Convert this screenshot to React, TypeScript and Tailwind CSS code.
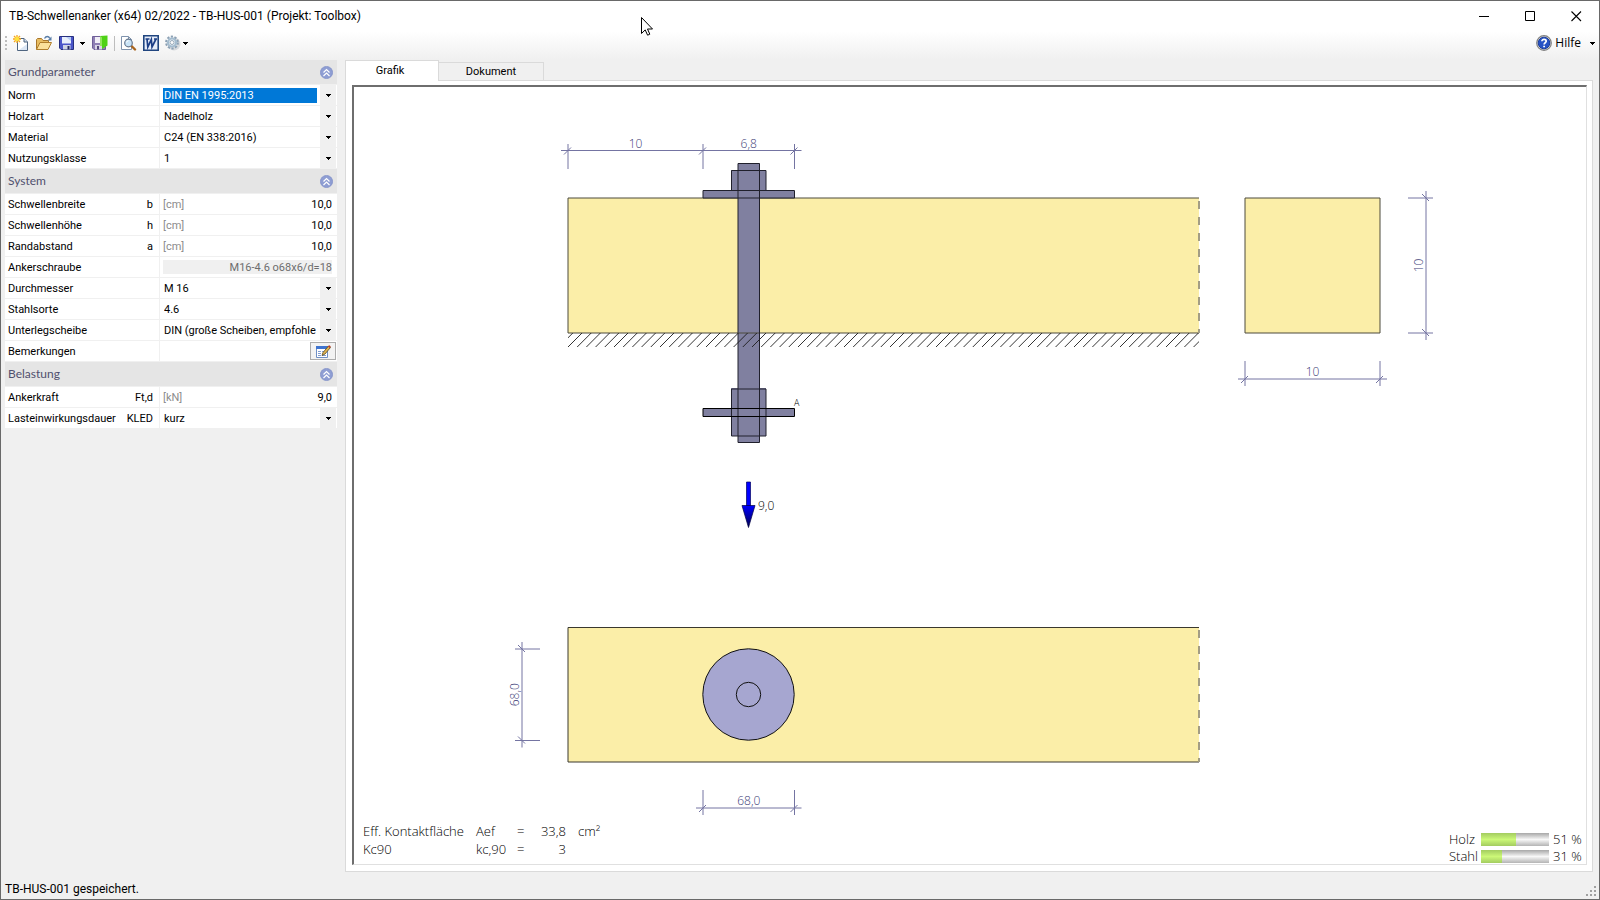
import React from 'react'
import clsx from 'clsx'

type RowKind = 'select' | 'number' | 'readonly' | 'notes'

interface ParamRow {
  id: string
  label: string
  symbol?: string
  unit?: string
  kind: RowKind
  value?: string
  selected?: boolean
}

interface ParamGroup {
  title: string
  rows: ParamRow[]
}

const groups: ParamGroup[] = [
  {
    title: 'Grundparameter',
    rows: [
      { id: 'norm', label: 'Norm', kind: 'select', value: 'DIN EN 1995:2013', selected: true },
      { id: 'holzart', label: 'Holzart', kind: 'select', value: 'Nadelholz' },
      { id: 'material', label: 'Material', kind: 'select', value: 'C24 (EN 338:2016)' },
      { id: 'nkl', label: 'Nutzungsklasse', kind: 'select', value: '1' }
    ]
  },
  {
    title: 'System',
    rows: [
      { id: 'b', label: 'Schwellenbreite', symbol: 'b', unit: '[cm]', kind: 'number', value: '10,0' },
      { id: 'h', label: 'Schwellenhöhe', symbol: 'h', unit: '[cm]', kind: 'number', value: '10,0' },
      { id: 'a', label: 'Randabstand', symbol: 'a', unit: '[cm]', kind: 'number', value: '10,0' },
      { id: 'schraube', label: 'Ankerschraube', kind: 'readonly', value: 'M16-4.6 o68x6/d=18' },
      { id: 'durchmesser', label: 'Durchmesser', kind: 'select', value: 'M 16' },
      { id: 'stahl', label: 'Stahlsorte', kind: 'select', value: '4.6' },
      { id: 'scheibe', label: 'Unterlegscheibe', kind: 'select', value: 'DIN (große Scheiben, empfohlen)' },
      { id: 'notes', label: 'Bemerkungen', kind: 'notes' }
    ]
  },
  {
    title: 'Belastung',
    rows: [
      { id: 'ft', label: 'Ankerkraft', symbol: 'Ft,d', unit: '[kN]', kind: 'number', value: '9,0' },
      { id: 'kled', label: 'Lasteinwirkungsdauer', symbol: 'KLED', kind: 'select', value: 'kurz' }
    ]
  }
]

const Caret = () => (
  <svg width="5" height="3" viewBox="0 0 5 3" className="shrink-0" shapeRendering="crispEdges">
    <path d="M0 0h5v1H4v1H3v1H2V2H1V1H0z" fill="#000" />
  </svg>
)

const NewIcon = () => (
  <svg width="16" height="16" viewBox="0 0 16 16">
    <path d="M4.500 3.500h6.500l3.500 3.500v8.500h-10z" fill="#fff" stroke="#4f6580" />
    <path d="M6 15h8V9z" fill="#dbe6f4" />
    <path d="M11 3.500V7h3.500" fill="#cfdcec" stroke="#4f6580" />
    <path d="M4 0v8M0 4h8M1 1l6 6M7 1L1 7" stroke="#f7a51b" strokeWidth="1.300" />
    <circle cx="4" cy="4" r="2.200" fill="#ffe23c" />
  </svg>
)

const OpenIcon = () => (
  <svg width="16" height="16" viewBox="0 0 16 16">
    <path d="M.5 14.500V4.500l1-1h4l1.500 2h5.500v3" fill="#e8bd62" stroke="#a9772a" />
    <path d="M.5 14.500L4 7.500h11.500L12 14.500z" fill="#fbe09a" stroke="#b07e2c" />
    <path d="M8.500 3.500C10 .8 12.500.8 14 3.500" fill="none" stroke="#5a7ea8" strokeWidth="1.300" />
    <path d="M15.500 1.500v4h-4z" fill="#5a7ea8" />
  </svg>
)

const SaveIcon = () => (
  <svg width="15" height="16" viewBox="0 0 15 16">
    <path d="M.5 1.500h14v13H2L.5 13z" fill="#4a55c8" stroke="#27307f" />
    <path d="M3 2h9v6.500H3z" fill="#e8effc" />
    <path d="M7 2h5v4z" fill="#b8cdf4" />
    <path d="M4 10h7.500v4.500H4z" fill="#cdd3e4" />
    <path d="M8.500 11h2v3.500h-2z" fill="#20265e" />
  </svg>
)

const SaveExitIcon = () => (
  <svg width="16" height="16" viewBox="0 0 16 16">
    <path d="M.5 1.500h13v13H2L.5 13z" fill="#8f7fb4" stroke="#6f5f98" />
    <path d="M3 2h6v6H3z" fill="#f1eef6" />
    <path d="M3 10h7v4.500H3z" fill="#d9d5e5" />
    <path d="M5 11h2v3.500H5z" fill="#54467c" />
    <path d="M8 1l7.500-.5v10L10 14V3z" fill="#4fd216" />
    <path d="M8 1l2 1.500V11H8z" fill="#91e85d" />
  </svg>
)

const PreviewIcon = () => (
  <svg width="16" height="16" viewBox="0 0 16 16">
    <path d="M.5 1.500h7l3 3v10H.5z" fill="#fff" stroke="#7f93ad" />
    <path d="M7.500 1.500v3h3" fill="none" stroke="#7f93ad" />
    <path d="M10.500 11l3.500 3.500" stroke="#a8641d" strokeWidth="2.400" strokeLinecap="round" />
    <circle cx="7.500" cy="8" r="3.800" fill="#c9e3f6" stroke="#66788f" strokeWidth="1.200" />
    <path d="M5.500 7.500a2.300 2.300 0 012-1.800" fill="none" stroke="#fff" />
  </svg>
)

const WordIcon = () => (
  <svg width="16" height="16" viewBox="0 0 16 16">
    <path d="M.8.8h14.400v14.400H.8z" fill="#e6edf9" stroke="#20457f" strokeWidth="1.600" />
    <path d="M2.500 4h4M4 4l.8 8L8.300 4.500l.7 7.500L13 4M11 4h3" fill="none" stroke="#1d3f86" strokeWidth="1.700" />
  </svg>
)

const GearIcon = () => (
  <svg width="16" height="16" viewBox="0 0 16 16">
    <ellipse cx="9" cy="9" rx="6.500" ry="6.500" fill="#d8dadd" />
    <circle cx="7" cy="7.500" r="5.900" fill="none" stroke="#8ba0b4" strokeWidth="2" strokeDasharray="2.200 1.500" />
    <circle cx="7" cy="7.500" r="4" fill="#edf4f9" stroke="#a4bccf" strokeWidth="2.200" />
    <circle cx="7" cy="7.500" r="2" fill="#fafafa" stroke="#8397aa" strokeWidth=".8" />
  </svg>
)

const HelpIcon = () => (
  <svg width="16" height="16" viewBox="0 0 16 16">
    <circle cx="8" cy="8" r="7.300" fill="#d8d8d8" stroke="#808080" strokeWidth="1.200" />
    <circle cx="8" cy="8" r="5.800" fill="#2753c4" stroke="#1c3f9e" />
    <path d="M5.900 6.300c0-2.700 4.300-2.600 4.300 0 0 1.500-2.100 1.500-2.100 3.200" fill="none" stroke="#fff" strokeWidth="1.700" />
    <path d="M7.200 10.700H9v1.600H7.200z" fill="#fff" />
  </svg>
)

const CollapseIcon = () => (
  <svg width="13" height="13" viewBox="0 0 13 13">
    <circle cx="6.500" cy="6.500" r="6.100" fill="#8f9ed3" stroke="#7a8ac6" strokeWidth=".7" />
    <path d="M3.500 6.500l3-3 3 3M3.500 10l3-3 3 3" fill="none" stroke="#fff" strokeWidth="1.200" />
  </svg>
)

const NotesIcon = () => (
  <svg width="16" height="13" viewBox="0 0 16 13">
    <path d="M1.500 1.500h11v11h-11z" fill="#fff" stroke="#6f8fc4" />
    <path d="M1 1h12v3H1z" fill="#3f74cf" />
    <path d="M3 6.500h3M3 8.500h3M3 10.500h3M7 6.500h4M7 10.500h4" stroke="#7f9bd0" />
    <path d="M7 10.500l1-3L13.500 1 15.500 2.500 10 9z" fill="#e0b350" stroke="#5b4a1e" strokeWidth=".8" />
    <path d="M13 1.500L14.500.3l1.300 1.200-1 1.500z" fill="#c0392b" />
  </svg>
)

const TitleBar = () => (
  <header className="flex h-[30px] items-center bg-white pl-2">
    <h1 className="flex-1 font-['Roboto',sans-serif] text-[12px] leading-4">
      TB-Schwellenanker (x64) 02/2022 - TB-HUS-001 (Projekt: Toolbox)
    </h1>
    <button aria-label="Minimieren" className="flex h-full w-[46px] items-center justify-center">
      <svg width="11" height="11" viewBox="0 0 11 11">
        <path d="M0 5.500h10" stroke="#000" />
      </svg>
    </button>
    <button aria-label="Maximieren" className="flex h-full w-[46px] items-center justify-center">
      <svg width="11" height="11" viewBox="0 0 11 11">
        <path d="M.5.500h9v9h-9z" fill="none" stroke="#000" />
      </svg>
    </button>
    <button aria-label="Schließen" className="flex h-full w-[46px] items-center justify-center">
      <svg width="11" height="11" viewBox="0 0 11 11">
        <path d="M.5.500l9.500 9.500M10 .5L.5 10" stroke="#000" strokeWidth="1.100" />
      </svg>
    </button>
  </header>
)

const Toolbar = () => (
  <div className="flex h-[29px] items-start bg-linear-to-b from-white to-[#f0f0f0] pt-1 pr-1 pl-1" role="toolbar">
    <div className="flex h-4 items-center">
      <svg width="3" height="14" viewBox="0 0 3 14" className="mr-[5px]" shapeRendering="crispEdges">
        <path d="M0 0h2v2H0zM0 4h2v2H0zM0 8h2v2H0zM0 12h2v2H0z" fill="#bdbdbd" />
      </svg>
      <button aria-label="Neu" className="mr-[7px]"><NewIcon /></button>
      <button aria-label="Öffnen" className="mr-[7px]"><OpenIcon /></button>
      <button aria-label="Speichern" className="mr-[6px]"><SaveIcon /></button>
      <button aria-label="Speichern unter" className="mr-[7px]"><Caret /></button>
      <button aria-label="Speichern und beenden" className="mr-[6px]"><SaveExitIcon /></button>
      <span className="mr-[6px] h-[15px] w-px bg-[#bdbdbd]" />
      <button aria-label="Seitenansicht" className="mr-[6px]"><PreviewIcon /></button>
      <button aria-label="Word" className="mr-[6px]"><WordIcon /></button>
      <button aria-label="Einstellungen" className="flex items-center gap-[2px]">
        <GearIcon />
        <Caret />
      </button>
    </div>
    <button className="ml-auto flex h-4 items-center text-[12px]">
      <HelpIcon />
      <span className="mr-[9px] ml-[3px]">Hilfe</span>
      <Caret />
    </button>
  </div>
)

const ParamControl: React.FC<{ row: ParamRow }> = ({ row }) => {
  if (row.kind === 'select') {
    return (
      <>
        <select
          id={row.id}
          className={clsx(
            'mt-px mr-[3px] ml-[3px] h-[15px] w-0 flex-1 appearance-none overflow-hidden px-px leading-[15px] outline-none',
            row.selected ? 'bg-[#0078d7] text-white' : 'bg-white'
          )}
        >
          <option>{row.value}</option>
        </select>
        <span className="pointer-events-none mr-px flex h-5 w-4 items-center justify-center bg-[#f0f0f0]">
          <Caret />
        </span>
      </>
    )
  }
  if (row.kind === 'notes') {
    return (
      <button id={row.id} aria-label="Bemerkungen bearbeiten" className="mr-px ml-auto flex h-[18px] w-[26px] items-center justify-center border border-[#adadad] bg-[#f3f3f3]">
        <NotesIcon />
      </button>
    )
  }
  return (
    <>
      {row.unit && <span className="ml-[3px] w-8 pt-[2px] text-[#8c8c8c]">{row.unit}</span>}
      <input
        id={row.id}
        defaultValue={row.value}
        readOnly={row.kind === 'readonly'}
        className={clsx(
          'mr-[5px] h-[14px] w-0 flex-1 pt-px text-right leading-[13px] outline-none',
          row.kind === 'readonly' ? 'ml-[3px] bg-[#f0f0f0] text-[#6d6d6d]' : 'bg-white'
        )}
      />
    </>
  )
}

const ParameterPanel = () => (
  <aside className="w-[332px] shrink-0 font-['Roboto',sans-serif] text-[11px] leading-4">
    {groups.map(group => (
      <section key={group.title}>
        <div className="mb-px flex h-6 items-center justify-between bg-[#e5e5e5] pr-1 pl-[3px]">
          <h2 className="font-['Lato',sans-serif] text-[12px] text-[#50506e]">{group.title}</h2>
          <button aria-label={`${group.title} einklappen`}><CollapseIcon /></button>
        </div>
        {group.rows.map(row => (
          <div key={row.id} className="mb-px flex h-5 gap-px">
            <label htmlFor={row.id} className="flex w-[154px] items-center justify-between bg-white pt-[2px] pr-[6px] pl-[3px]">
              <span>{row.label}</span>
              {row.symbol && <span>{row.symbol}</span>}
            </label>
            <div className="flex flex-1 items-center bg-white">
              <ParamControl row={row} />
            </div>
          </div>
        ))}
      </section>
    ))}
  </aside>
)

// Dimension line with extension lines and slashes at every point
interface DimensionProps {
  points: number[]
  at: number
  ext: [number, number]
  labels: string[]
  vertical?: boolean
}

const Dimension: React.FC<DimensionProps> = ({ points, at, ext, labels, vertical = false }) => {
  const first = points[0] - 7
  const last = points[points.length - 1] + 7
  return (
    <g>
      <g stroke="#5c5c92" strokeWidth="1" fill="none" opacity="0.85">
        <path d={vertical ? `M${at} ${first}V${last}` : `M${first} ${at}H${last}`} />
        {points.map(p => (
          <path
            key={p}
            d={
              vertical
                ? `M${ext[0]} ${p}H${ext[1]}M${at - 4} ${p - 4}l7 7`
                : `M${p} ${ext[0]}V${ext[1]}M${p - 4} ${at + 4}l7 -7`
            }
          />
        ))}
      </g>
      {labels.map((label, i) => {
        const mid = (points[i] + points[i + 1]) / 2
        return (
          <text
            key={i}
            textAnchor="middle"
            fill="#404078"
            fontSize="12"
            transform={vertical ? `translate(${at - 3} ${mid}) rotate(-90)` : `translate(${mid} ${at - 3})`}
          >
            {label}
          </text>
        )
      })}
    </g>
  )
}

const hatchCount = 70

const AnchorDrawing = () => (
  <svg viewBox="354 87 1232 777" className="block h-auto w-full font-['Open_Sans',sans-serif] font-light" role="img" aria-label="Schwellenanker">
    <defs>
      <clipPath id="hatch-area">
        <path d="M568 333H1199V347H568z" />
      </clipPath>
      <linearGradient id="arrow-head" x1="0" y1="0" x2="0" y2="1">
        <stop offset="0" stopColor="#0000ff" />
        <stop offset="1" stopColor="#000050" />
      </linearGradient>
    </defs>

    {/* Side view */}
    <path d="M568 198H1199V333H568z" fill="#fbeea8" />
    <path d="M1199 198H568V333H1199" fill="none" stroke="#4d4a3c" />
    <path d="M1199 201V333" stroke="#a39d85" strokeWidth="2" strokeDasharray="8 8" />

    <g fill="#8080a0">
      <path d="M738 163h21.500v279.500h-21.500z" />
      <path d="M731 170h35v20h-35zM703 190h91v8h-91z" />
      <path d="M731 388h35v48h-35zM703 408h91v8h-91z" />
    </g>
    <g fill="none" stroke="#20202c">
      <path d="M738 163.500h21.500v279h-21.500z" />
      <path d="M731.500 170.500h34.500v20h-34.500zM703 190.500h91.500v7.500h-91.500z" />
      <path d="M731.500 389h34.500v47h-34.500z" />
      <path d="M703 408.500h91.500v8h-91.500z" stroke="#000" />
    </g>
    <path d="M738 333H759" stroke="#4d4a3c" />
    <g clipPath="url(#hatch-area)" stroke="#1c1c1c" strokeWidth="0.9">
      {Array.from({ length: hatchCount }, (_, i) => (
        <path key={i} d={`M${558.800 + i * 9.200} 347l14 -14`} />
      ))}
    </g>
    <text x="794" y="406" fontSize="9" fill="#000">A</text>

    <path d="M746.500 482h4v24h-4z" fill="#0000ff" stroke="#000060" strokeWidth="0.700" />
    <path d="M742 505.500h13l-6.500 22z" fill="url(#arrow-head)" stroke="#000040" strokeWidth="0.700" />
    <text x="758" y="510" fontSize="12" fill="#000">9,0</text>

    {/* Cross section */}
    <path d="M1245 198h135v135h-135z" fill="#fbeea8" stroke="#4d4a3c" />

    {/* Top view */}
    <path d="M568 627H1199V762H568z" fill="#fbeea8" />
    <path d="M1199 627.500H568V762H1199" fill="none" stroke="#3a382e" />
    <path d="M1199 630V762" stroke="#a39d85" strokeWidth="2" strokeDasharray="8 8" />
    <circle cx="748.500" cy="694.500" r="45.700" fill="#a6a6d0" stroke="#111" />
    <circle cx="748.500" cy="694.500" r="12.200" fill="none" stroke="#111" />

    <Dimension points={[568, 703, 794.5]} at={150.5} ext={[144, 169]} labels={['10', '6,8']} />
    <Dimension points={[198, 333]} at={1426} ext={[1408, 1433]} labels={['10']} vertical />
    <Dimension points={[1245, 1380]} at={379} ext={[361, 386]} labels={['10']} />
    <Dimension points={[649, 740.5]} at={522} ext={[515, 540]} labels={['68,0']} vertical />
    <Dimension points={[703, 794.5]} at={808} ext={[790, 815]} labels={['68,0']} />
  </svg>
)

const results = [
  { name: 'Eff. Kontaktfläche', symbol: 'Aef', value: '33,8', unit: 'cm²' },
  { name: 'Kc90', symbol: 'kc,90', value: '3', unit: '' }
]

const utilization = [
  { name: 'Holz', percent: 51 },
  { name: 'Stahl', percent: 31 }
]

const Canvas = () => (
  <div className="relative border-t-2 border-r border-b border-l-2 border-t-[#6e6e6e] border-r-[#e0e0e0] border-b-[#e0e0e0] border-l-[#6e6e6e] bg-white">
    <AnchorDrawing />
    <div className="absolute right-0 bottom-0 left-0 flex items-end justify-between pr-1 pl-[9px] font-['Open_Sans',sans-serif] text-[13px] font-light">
      <table className="mb-[6px] leading-[18px]">
        <tbody>
          {results.map(r => (
            <tr key={r.name}>
              <td className="w-[113px] p-0">{r.name}</td>
              <td className="w-[41px] p-0">{r.symbol}</td>
              <td className="w-[9px] p-0">=</td>
              <td className="w-[40px] p-0 text-right">{r.value}</td>
              <td className="p-0 pl-3">{r.unit}</td>
            </tr>
          ))}
        </tbody>
      </table>
      <div className="leading-[15px]">
        {utilization.map(u => (
          <div key={u.name} className="flex h-[17px] items-center pt-[2px]">
            <span className="w-8">{u.name}</span>
            <div className="h-[13px] w-[68px] bg-linear-to-b from-[#a8a8a8] via-[#f8f8f8] to-[#b4b4b4]">
              <div
                className="h-full bg-linear-to-b from-[#a3cc60] via-[#ccf878] to-[#a3cc60]"
                style={{ width: `${u.percent}%` }}
              />
            </div>
            <span className="w-[33px] pl-1 whitespace-nowrap">{u.percent} %</span>
          </div>
        ))}
      </div>
    </div>
  </div>
)

const Workspace = () => (
  <main className="flex min-w-0 flex-1 flex-col">
    <div className="flex items-end font-['Roboto',sans-serif] text-[11px] leading-4" role="tablist">
      <button role="tab" aria-selected="true" className="z-10 -mb-px h-[21px] w-[94px] border border-b-0 border-[#dadada] bg-white pr-1">
        Grafik
      </button>
      <button role="tab" aria-selected="false" className="h-[18px] w-[105px] border border-b-0 border-l-0 border-[#dadada] bg-[#f0f0f0] pt-px">
        Dokument
      </button>
    </div>
    <div className="border border-[#dadada] bg-white pt-1 pr-[5px] pb-[6px] pl-[6px]">
      <Canvas />
    </div>
  </main>
)

const App = () => (
  <div className="relative flex min-h-screen flex-col border border-[#696969] bg-[#f0f0f0] font-['Open_Sans',sans-serif] text-[12px] text-black">
    <TitleBar />
    <Toolbar />
    <div className="flex gap-2 pr-[6px] pl-1">
      <ParameterPanel />
      <Workspace />
    </div>
    <footer className="flex flex-1 items-end justify-between pr-[2px] pb-[2px] pl-1">
      <span className="font-['Roboto',sans-serif] leading-4">TB-HUS-001 gespeichert.</span>
      <svg width="12" height="12" viewBox="0 0 12 12" shapeRendering="crispEdges">
        <path d="M9 1h2v2H9zM9 5h2v2H9zM9 9h2v2H9zM5 5h2v2H5zM5 9h2v2H5zM1 9h2v2H1z" fill="#a0a0a0" />
      </svg>
    </footer>
    <svg width="12" height="19" viewBox="0 0 12 19" className="pointer-events-none absolute top-4 left-[640px]">
      <path d="M.5.500v16l3.700-3.600 2.400 5.300 2.200-1-2.300-5.200h5z" fill="#fff" stroke="#000" />
    </svg>
  </div>
)

export default App
